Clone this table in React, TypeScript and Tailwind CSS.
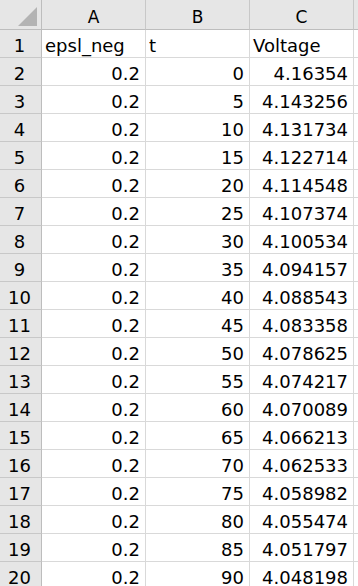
const voltage = [
  "4.16354",
  "4.143256",
  "4.131734",
  "4.122714",
  "4.114548",
  "4.107374",
  "4.100534",
  "4.094157",
  "4.088543",
  "4.083358",
  "4.078625",
  "4.074217",
  "4.070089",
  "4.066213",
  "4.062533",
  "4.058982",
  "4.055474",
  "4.051797",
  "4.048198",
];

const font = { fontFamily: '"DejaVu Sans", sans-serif' };

function HeadCell({ label, last }: { label: string; last?: boolean }) {
  return (
    <div
      className={`h-[30px] bg-[#e6e6e6] border-b border-[#bdbdbd] flex items-end justify-center pb-[2px] text-[17px] leading-[20px] text-black ${
        last ? "" : "border-r border-r-[#c8c8c8]"
      }`}
    >
      {label}
    </div>
  );
}

function RowHead({ n }: { n: number }) {
  return (
    <div className="h-[28px] bg-[#e6e6e6] border-b border-r border-b-[#c8c8c8] border-r-[#bdbdbd] flex items-end justify-center pb-px text-[18px] leading-[21px] text-black pr-[2px]">
      {n}
    </div>
  );
}

function Cell({ value, right }: { value?: string; right?: boolean }) {
  return (
    <div
      className={`h-[28px] border-b border-r border-[#d9d9d9] flex items-end pb-px text-[18px] leading-[21px] text-black whitespace-nowrap overflow-hidden ${
        right ? "justify-end pr-[5px]" : "justify-start pl-[3px]"
      }`}
    >
      {value}
    </div>
  );
}

export default function App() {
  return (
    <div className="w-[358px] h-[586px] overflow-hidden bg-white" style={font}>
      <div className="grid grid-cols-[42px_104px_104px_104px_1fr]">
        {/* corner */}
        <div className="h-[30px] bg-[#e6e6e6] border-b border-r border-[#bdbdbd] flex items-end justify-end pr-[4px] pb-[3px]">
          <svg width="19" height="19" viewBox="0 0 19 19">
            <polygon points="19,0 19,19 0,19" fill="#b3b3b3" />
          </svg>
        </div>
        <HeadCell label="A" />
        <HeadCell label="B" />
        <HeadCell label="C" />
        <HeadCell label="" last />

        <RowHead n={1} />
        <Cell value="epsl_neg" />
        <Cell value="t" />
        <Cell value="Voltage" />
        <div className="h-[28px] border-b border-[#d9d9d9]" />

        {voltage.map((v, i) => (
          <div key={i} className="contents">
            <RowHead n={i + 2} />
            <Cell value="0.2" right />
            <Cell value={String(i * 5)} right />
            <Cell value={v} right />
            <div className="h-[28px] border-b border-[#d9d9d9]" />
          </div>
        ))}
      </div>
    </div>
  );
}
